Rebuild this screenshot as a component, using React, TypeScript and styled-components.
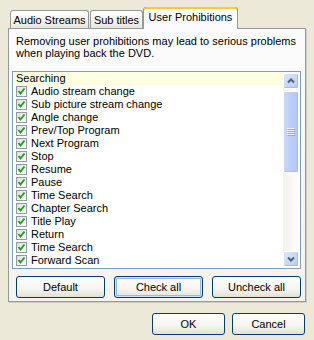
import React, { useState } from 'react'
import styled, { createGlobalStyle, css } from 'styled-components'

const GlobalStyle = createGlobalStyle`
  html, body {
    margin: 0;
    padding: 0;
    background: #ECE9D8;
  }
  body {
    font-family: "Liberation Sans", Arial, sans-serif;
    font-size: 11px;
    color: #000;
  }
`

const tabs = [
    { label: 'Audio Streams', width: 79 },
    { label: 'Sub titles', width: 53 },
    { label: 'User Prohibitions', width: 95 },
]

const prohibitions: string[] = [
    'Audio stream change',
    'Sub picture stream change',
    'Angle change',
    'Prev/Top Program',
    'Next Program',
    'Stop',
    'Resume',
    'Pause',
    'Time Search',
    'Chapter Search',
    'Title Play',
    'Return',
    'Time Search',
    'Forward Scan',
]

const Dialog = styled.div`
  width: 314px;
  height: 340px;
  box-sizing: border-box;
  padding: 7px 9px 0 8px;
  background: #ECE9D8;
`

const TabStrip = styled.div`
  display: flex;
  align-items: flex-end;
  height: 21px;
  padding-left: 2px;
`

const Tab = styled.div<{ $active?: boolean; $w: number }>`
  box-sizing: border-box;
  width: ${p => p.$w}px;
  height: 18px;
  margin-right: 1px;
  border: 1px solid #919B9C;
  border-bottom: none;
  border-radius: 3px 3px 0 0;
  background: linear-gradient(#FFFFFF, #F4F3EE 60%, #E8E6DC);
  display: flex;
  align-items: center;
  justify-content: center;
  padding-top: 1px;
  white-space: nowrap;

  ${p => p.$active && css`
    position: relative;
    z-index: 1;
    height: 22px;
    margin-bottom: -1px;
    margin-left: -1px;
    border-top: none;
    background: #FCFCFE;
    box-shadow: inset 0 2px 0 #FFC83C, inset 0 1px 0 #E68B2C;
    align-items: flex-start;
    padding-top: 4px;
  `}
`

const Panel = styled.div`
  box-sizing: border-box;
  width: 298px;
  height: 274px;
  border: 1px solid #919B9C;
  background: linear-gradient(#FCFCFE, #F6F5F1 70%, #F4F3EE);
  box-shadow: 1px 1px 0 #D0CEBF;
  padding: 6px 4px 0 3px;
`

const Notice = styled.p`
  margin: 0 0 12px 4px;
  line-height: 12px;
`

const ListBox = styled.div`
  box-sizing: border-box;
  height: 198px;
  border: 1px solid #7F9DB9;
  background: #FFFFFF;
  display: flex;
`

const Rows = styled.div`
  flex: 1;
  display: flex;
  flex-direction: column;
`

const Row = styled.div<{ $header?: boolean }>`
  height: 13px;
  display: flex;
  align-items: center;
  gap: 4px;
  padding-left: 3px;
  line-height: 13px;
  white-space: nowrap;
  ${p => p.$header && css`
    background: #FFFFE1;
    padding-left: 3px;
  `}
`

const CheckBox = styled.span`
  box-sizing: border-box;
  width: 11px;
  height: 11px;
  border: 1px solid #8E9AA6;
  background: linear-gradient(135deg, #DCDCD6, #FFFFFF 80%);
  display: flex;
  align-items: center;
  justify-content: center;
  flex: none;
`

const ScrollBar = styled.div`
  width: 16px;
  margin: 1px 1px 1px 0;
  display: flex;
  flex-direction: column;
  gap: 2px;
  background: linear-gradient(90deg, #F3F1EC, #FEFEFB);
`

const ScrollButton = styled.div`
  box-sizing: border-box;
  width: 16px;
  height: 16px;
  border: 1px solid #FFFFFF;
  border-radius: 2px;
  background: linear-gradient(135deg, #DCE6FC, #B9CAF3);
  box-shadow: inset -1px -1px 0 #A8BBEA;
  display: flex;
  align-items: center;
  justify-content: center;
`

const Thumb = styled.div`
  box-sizing: border-box;
  height: 82px;
  border: 1px solid #FFFFFF;
  border-radius: 2px;
  background: linear-gradient(90deg, #C9D8FC, #BACDFB 50%, #B1C6F8);
  box-shadow: inset -1px -1px 0 #A8BBEA;
  display: flex;
  align-items: center;
  justify-content: center;
`

const Track = styled.div`
  flex: 1;
`

const ButtonRow = styled.div`
  display: grid;
  grid-template-columns: repeat(3, 89px);
  gap: 9px;
  margin: 7px 0 0 4px;
`

const Button = styled.button<{ $w?: number; $focus?: boolean }>`
  box-sizing: border-box;
  height: 22px;
  ${p => p.$w && css`width: ${p.$w}px;`}
  border: 1px solid #003C74;
  border-radius: 3px;
  background: linear-gradient(#FFFFFF, #F5F4EF 60%, #E3E1D6);
  font-family: "Liberation Sans", Arial, sans-serif;
  font-size: 11px;
  color: #000;
  padding: 0;
  ${p => p.$focus && css`
    box-shadow: inset 0 0 0 1px #CEE7FF, inset 0 0 0 2px #98B8EA;
  `}
`

const Footer = styled.div`
  display: flex;
  justify-content: flex-end;
  gap: 7px;
  margin-top: 11px;
`

const Chevron = ({ down }: { down?: boolean }) => (
    <svg width="8" height="6" viewBox="0 0 8 6">
        <polyline
            points={down ? '1,1.5 4,4.5 7,1.5' : '1,4.5 4,1.5 7,4.5'}
            fill="none"
            stroke="#4D6185"
            strokeWidth="2"
        />
    </svg>
)

const Grip = () => (
    <svg width="8" height="8" viewBox="0 0 8 8">
        {[0, 2, 4, 6].map(y => (
            <g key={y}>
                <rect x="0" y={y} width="7" height="1" fill="#EEF4FE" />
                <rect x="1" y={y + 1} width="7" height="1" fill="#8CA9EB" />
            </g>
        ))}
    </svg>
)

const Check = () => (
    <svg width="9" height="9" viewBox="0 0 9 9">
        <polyline points="1.5,4 3.5,6.5 7.5,1.5" fill="none" stroke="#21A121" strokeWidth="2" />
    </svg>
)

const App = () => {
    let [active] = useState<number>(2)

    return (
        <>
            <GlobalStyle />
            <Dialog>
                <TabStrip>
                    {tabs.map((t, idx) => (
                        <Tab key={t.label} $w={t.width} $active={idx === active}>{t.label}</Tab>
                    ))}
                </TabStrip>
                <Panel>
                    <Notice>
                        Removing user prohibitions may lead to serious problems<br />
                        when playing back the DVD.
                    </Notice>
                    <ListBox>
                        <Rows>
                            <Row $header>Searching</Row>
                            {prohibitions.map((item, idx) => (
                                <Row key={idx}>
                                    <CheckBox><Check /></CheckBox>
                                    {item}
                                </Row>
                            ))}
                        </Rows>
                        <ScrollBar>
                            <ScrollButton><Chevron /></ScrollButton>
                            <Thumb><Grip /></Thumb>
                            <Track />
                            <ScrollButton><Chevron down /></ScrollButton>
                        </ScrollBar>
                    </ListBox>
                    <ButtonRow>
                        <Button>Default</Button>
                        <Button $focus>Check all</Button>
                        <Button>Uncheck all</Button>
                    </ButtonRow>
                </Panel>
                <Footer>
                    <Button $w={73}>OK</Button>
                    <Button $w={73}>Cancel</Button>
                </Footer>
            </Dialog>
        </>
    )
}

export default App
